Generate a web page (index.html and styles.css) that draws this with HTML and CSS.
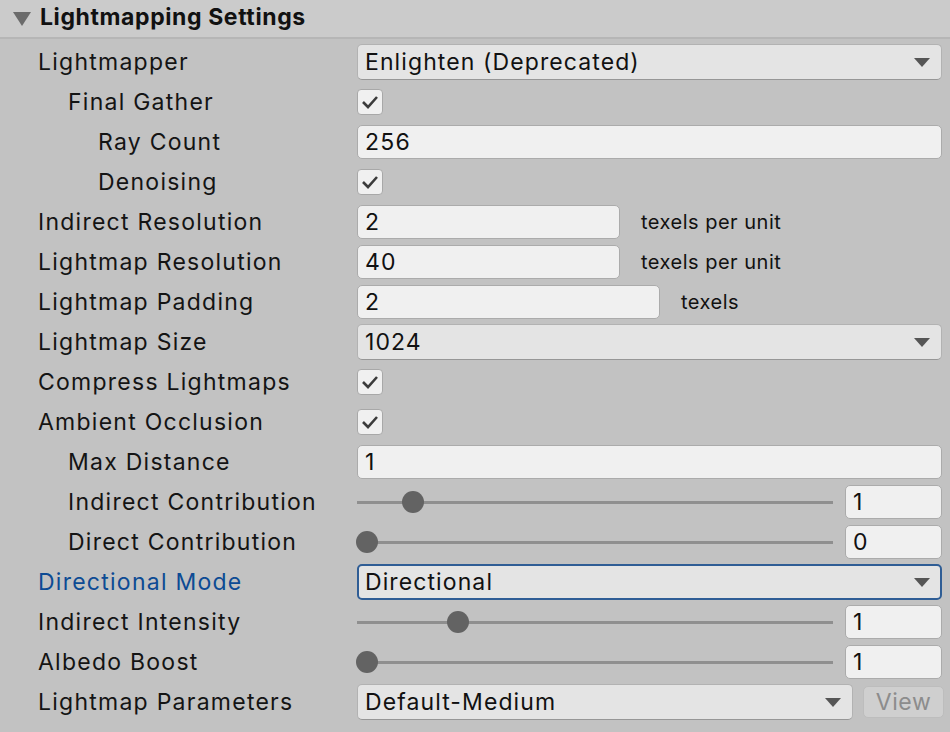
FILE: index.html
```html
<!DOCTYPE html>
<html>
<head>
<meta charset="utf-8">
<link rel="stylesheet" href="styles.css">
</head>
<body>
<div class="panel">
  <div class="header">
    <svg class="foldout" width="18" height="14" viewBox="0 0 18 14"><polygon points="0,0 18,0 9,14" fill="#6b6b6b"/></svg>
    <span class="title">Lightmapping Settings</span>
  </div>
  <div class="rows">
    <div class="row">
      <div class="label">Lightmapper</div>
      <div class="ctrl"><div class="dropdown full"><span>Enlighten (Deprecated)</span><svg class="arrow" width="16" height="9" viewBox="0 0 16 9"><polygon points="0,0 16,0 8,9" fill="#555"/></svg></div></div>
    </div>
    <div class="row">
      <div class="label l1">Final Gather</div>
      <div class="ctrl"><div class="check"><svg width="18" height="14" viewBox="0 0 18 14"><path d="M2 7 L7 12 L16 2" fill="none" stroke="#3b3b3b" stroke-width="2.6"/></svg></div></div>
    </div>
    <div class="row">
      <div class="label l2">Ray Count</div>
      <div class="ctrl"><div class="field full">256</div></div>
    </div>
    <div class="row">
      <div class="label l2">Denoising</div>
      <div class="ctrl"><div class="check"><svg width="18" height="14" viewBox="0 0 18 14"><path d="M2 7 L7 12 L16 2" fill="none" stroke="#3b3b3b" stroke-width="2.6"/></svg></div></div>
    </div>
    <div class="row">
      <div class="label">Indirect Resolution</div>
      <div class="ctrl"><div class="field w263">2</div><span class="suffix">texels per unit</span></div>
    </div>
    <div class="row">
      <div class="label">Lightmap Resolution</div>
      <div class="ctrl"><div class="field w263">40</div><span class="suffix">texels per unit</span></div>
    </div>
    <div class="row">
      <div class="label">Lightmap Padding</div>
      <div class="ctrl"><div class="field w303">2</div><span class="suffix">texels</span></div>
    </div>
    <div class="row">
      <div class="label">Lightmap Size</div>
      <div class="ctrl"><div class="dropdown full"><span>1024</span><svg class="arrow" width="16" height="9" viewBox="0 0 16 9"><polygon points="0,0 16,0 8,9" fill="#555"/></svg></div></div>
    </div>
    <div class="row">
      <div class="label">Compress Lightmaps</div>
      <div class="ctrl"><div class="check"><svg width="18" height="14" viewBox="0 0 18 14"><path d="M2 7 L7 12 L16 2" fill="none" stroke="#3b3b3b" stroke-width="2.6"/></svg></div></div>
    </div>
    <div class="row">
      <div class="label">Ambient Occlusion</div>
      <div class="ctrl"><div class="check"><svg width="18" height="14" viewBox="0 0 18 14"><path d="M2 7 L7 12 L16 2" fill="none" stroke="#3b3b3b" stroke-width="2.6"/></svg></div></div>
    </div>
    <div class="row">
      <div class="label l1">Max Distance</div>
      <div class="ctrl"><div class="field full">1</div></div>
    </div>
    <div class="row">
      <div class="label l1">Indirect Contribution</div>
      <div class="ctrl"><div class="slider"><div class="track"></div><div class="travel"><div class="thumb" style="left: 10%"></div></div></div><div class="field num">1</div></div>
    </div>
    <div class="row">
      <div class="label l1">Direct Contribution</div>
      <div class="ctrl"><div class="slider"><div class="track"></div><div class="travel"><div class="thumb" style="left: 0%"></div></div></div><div class="field num">0</div></div>
    </div>
    <div class="row">
      <div class="label focus">Directional Mode</div>
      <div class="ctrl"><div class="dropdown full focused"><span>Directional</span><svg class="arrow" width="16" height="9" viewBox="0 0 16 9"><polygon points="0,0 16,0 8,9" fill="#555"/></svg></div></div>
    </div>
    <div class="row">
      <div class="label">Indirect Intensity</div>
      <div class="ctrl"><div class="slider"><div class="track"></div><div class="travel"><div class="thumb" style="left: 20%"></div></div></div><div class="field num">1</div></div>
    </div>
    <div class="row">
      <div class="label">Albedo Boost</div>
      <div class="ctrl"><div class="slider"><div class="track"></div><div class="travel"><div class="thumb" style="left: 0%"></div></div></div><div class="field num">1</div></div>
    </div>
    <div class="row">
      <div class="label">Lightmap Parameters</div>
      <div class="ctrl"><div class="dropdown grow"><span>Default-Medium</span><svg class="arrow" width="16" height="9" viewBox="0 0 16 9"><polygon points="0,0 16,0 8,9" fill="#555"/></svg></div><div class="button">View</div></div>
    </div>
  </div>
</div>
</body>
</html>
```

FILE: styles.css
```css
html, body {
  margin: 0;
  padding: 0;
}
body {
  background: #c2c2c2;
  font-family: Inter, "Noto Sans", sans-serif;
  font-size: 23px;
  color: #111;
  width: 950px;
  height: 732px;
  overflow: hidden;
}
.header {
  height: 36px;
  padding-bottom: 1px;
  background: #cbcbcb;
  border-bottom: 2px solid #b6b6b6;
  display: flex;
  align-items: center;
}
.foldout {
  margin-left: 13px;
  margin-right: 9px;
  margin-top: 2px;
}
.title {
  font-weight: 700;
  font-size: 23px;
  letter-spacing: 0.6px;
  color: #111;
  margin-top: -2px;
}
.rows {
  padding-top: 3px;
}
.row {
  height: 40px;
  display: flex;
  align-items: center;
}
.label {
  width: 357px;
  box-sizing: border-box;
  padding-left: 38px;
  letter-spacing: 1.25px;
  white-space: nowrap;
  color: #141414;
}
.label.l1 { padding-left: 68px; }
.label.l2 { padding-left: 98px; }
.label.focus { color: #0d4b94; }
.ctrl {
  flex: 1;
  display: flex;
  align-items: center;
  padding-right: 8px;
}
.dropdown {
  height: 36px;
  box-sizing: border-box;
  background: #e4e4e4;
  border: 1px solid #b2b2b2;
  border-bottom-color: #969696;
  border-radius: 5px;
  display: flex;
  align-items: center;
  justify-content: space-between;
  padding: 0 11px 0 7px;
  letter-spacing: 1.1px;
}
.dropdown.full { flex: 1; }
.dropdown.grow { flex: 1; }
.dropdown.focused {
  border: 2px solid #2f5d95;
  padding-left: 6px;
  padding-right: 10px;
}
.field {
  height: 34px;
  box-sizing: border-box;
  background: #f0f0f0;
  border: 1px solid #ababab;
  border-radius: 5px;
  display: flex;
  align-items: center;
  padding-left: 7px;
  letter-spacing: 1.2px;
}
.field.full { flex: 1; }
.field.w263 { width: 263px; }
.field.w303 { width: 303px; }
.field.num { width: 97px; }
.suffix {
  font-size: 20px;
  margin-left: 21px;
  letter-spacing: 0.5px;
}
.check {
  width: 26px;
  height: 26px;
  box-sizing: border-box;
  background: #f0f0f0;
  border: 1px solid #a8a8a8;
  border-radius: 4px;
  display: flex;
  align-items: center;
  justify-content: center;
}
.slider {
  flex: 1;
  position: relative;
  height: 24px;
  margin-right: 12px;
}
.track {
  position: absolute;
  left: 0;
  right: 0;
  top: 11px;
  height: 3px;
  background: #8f8f8f;
}
.travel {
  position: absolute;
  left: -1px;
  right: 21px;
  top: 1px;
  height: 22px;
}
.thumb {
  position: absolute;
  top: 0;
  width: 22px;
  height: 22px;
  border-radius: 50%;
  background: #636363;
}
.button {
  width: 81px;
  height: 32px;
  box-sizing: border-box;
  margin-left: 10px;
  margin-right: -2px;
  background: #cfcfcf;
  border: 1px solid #bdbdbd;
  border-radius: 5px;
  color: #8c8c8c;
  display: flex;
  align-items: center;
  justify-content: center;
  letter-spacing: 0.6px;
}
```
